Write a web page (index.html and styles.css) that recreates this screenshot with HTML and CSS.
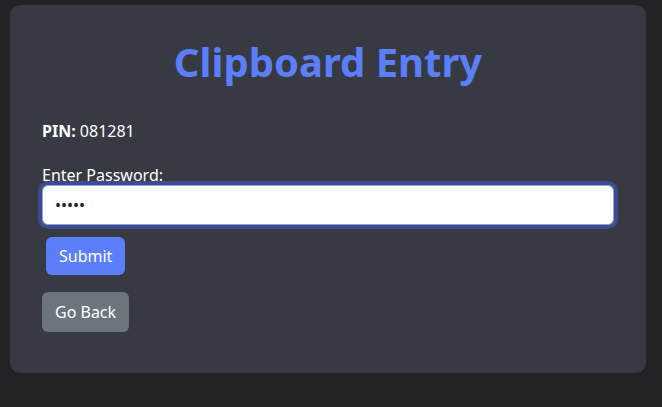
FILE: index.html
```html
<!DOCTYPE html>
<html>
<head>
<meta charset="utf-8">
<link rel="stylesheet" href="styles.css">
</head>
<body>
<div class="card">
  <h1 class="title">Clipboard Entry</h1>
  <p class="pin"><strong>PIN:</strong> 081281</p>
  <form class="form">
    <label class="label" for="pw">Enter Password:</label>
    <input class="input" id="pw" type="password" value="12345">
    <div class="actions"><button type="button" class="btn btn-primary">Submit</button></div>
  </form>
  <button type="button" class="btn btn-secondary">Go Back</button>
</div>
</body>
</html>
```
FILE: styles.css
```css
html, body {
  margin: 0;
  padding: 0;
  background: #222327;
  height: 100%;
}
body {
  padding: 5px 16px 0 10px;
  box-sizing: border-box;
  font-family: "Noto Sans", "Open Sans", sans-serif;
  font-size: 16px;
  color: #ffffff;
}
.card {
  background: #383a43;
  border-radius: 10px;
  padding: 33px 32px 41px 32px;
}
.title {
  margin: 0 0 33px 0;
  text-align: center;
  font-size: 40px;
  line-height: 48px;
  font-weight: 700;
  color: #5a7ff8;
}
.pin {
  margin: 0 0 22px 0;
  line-height: 24px;
}
.form {
  margin: 0 0 17px 0;
}
.label {
  display: block;
  line-height: 20px;
}
.input {
  display: block;
  width: 100%;
  box-sizing: border-box;
  height: 40px;
  margin: 0;
  padding: 6px 12px;
  border: 1px solid #86a0f5;
  border-radius: 6px;
  background: #fff;
  color: #212529;
  font-family: inherit;
  font-size: 16px;
  box-shadow: 0 0 0 4px #3e4c8c;
  outline: none;
}
.actions {
  margin-top: 12px;
  padding-left: 4px;
}
.btn {
  display: inline-block;
  font-family: inherit;
  font-size: 16px;
  line-height: 22px;
  padding: 7px 12px;
  border: 1px solid transparent;
  border-radius: 6px;
  color: #fff;
  cursor: pointer;
}
.btn-primary {
  background: #5a7ff8;
}
.btn-secondary {
  background: #6c757d;
  padding: 8px 12px;
}
```
